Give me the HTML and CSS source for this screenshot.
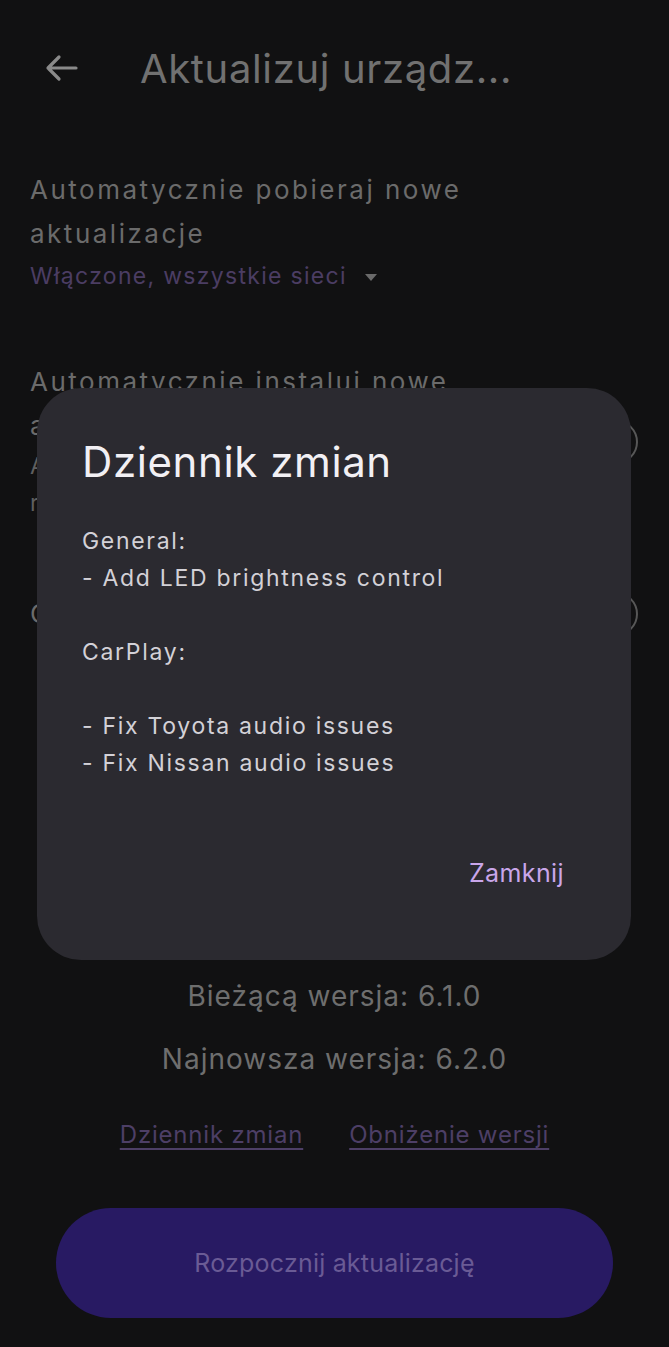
FILE: index.html
```html
<!DOCTYPE html>
<html lang="pl">
<head>
<meta charset="utf-8">
<title>Aktualizuj urządzenie</title>
<link rel="stylesheet" href="styles.css">
</head>
<body>
<div class="screen">
  <header class="topbar">
    <svg class="back" width="36" height="30" viewBox="0 0 36 30" aria-hidden="true">
      <path d="M33 15 H5 M16 4 L5 15 L16 26" fill="none" stroke="#8a8a8a" stroke-width="3.2" stroke-linecap="round" stroke-linejoin="round"/>
    </svg>
    <h1 class="title">Aktualizuj urządz...</h1>
  </header>

  <section class="settings">
    <div class="item">
      <div class="item-text">
        <div class="item-title">Automatycznie pobieraj nowe<br>aktualizacje</div>
        <div class="item-select">Włączone, wszystkie sieci <span class="caret"></span></div>
      </div>
    </div>
    <div class="item item-row item-install">
      <div class="item-text">
        <div class="item-title">Automatycznie instaluj nowe<br>aktualizacje</div>
        <div class="item-sub">Aktualizacje zostaną zainstalowane przy<br>restarcie urządzenia</div>
      </div>
      <span class="switch"></span>
    </div>
    <div class="item item-row item-third">
      <div class="item-text">
        <div class="item-title">Czyść pamięć podręczną</div>
      </div>
      <span class="switch"></span>
    </div>
  </section>

  <section class="versions">
    <p class="ver ver-current">Bieżącą wersja: 6.1.0</p>
    <p class="ver ver-latest">Najnowsza wersja: 6.2.0</p>
    <div class="links">
      <a class="link">Dziennik zmian</a>
      <a class="link">Obniżenie wersji</a>
    </div>
    <button class="start">Rozpocznij aktualizację</button>
  </section>

  <div class="dialog" role="dialog">
    <h2 class="dialog-title">Dziennik zmian</h2>
    <div class="dialog-body">
      <p>General:</p>
      <p>- Add LED brightness control</p>
      <p>&nbsp;</p>
      <p>CarPlay:</p>
      <p>&nbsp;</p>
      <p>- Fix Toyota audio issues</p>
      <p>- Fix Nissan audio issues</p>
    </div>
    <div class="dialog-actions">
      <button class="close">Zamknij</button>
    </div>
  </div>
</div>
</body>
</html>
```

FILE: styles.css
```css
* { box-sizing: border-box; }
html, body {
  margin: 0;
  padding: 0;
  background: #111112;
}
body {
  font-family: Inter, Roboto, "Noto Sans", sans-serif;
  color: #6d6d6d;
}
.screen {
  position: relative;
  width: 669px;
  height: 1347px;
  overflow: hidden;
  background: #111112;
  display: flex;
  flex-direction: column;
}
.topbar {
  display: flex;
  align-items: center;
  height: 136px;
  padding-left: 43px;
  gap: 61px;
}
.back { display: block; }
.title {
  margin: 0;
  font-size: 40px;
  font-weight: 400;
  color: #717171;
  letter-spacing: 0.65px;
}
.settings {
  display: flex;
  flex-direction: column;
  padding: 0 31px 0 30px;
}
.item { padding-top: 32px; }
.item-row {
  display: flex;
  align-items: center;
  justify-content: space-between;
}
.item-title {
  font-size: 26px;
  line-height: 44px;
  color: #6b6b6b;
  letter-spacing: 2.5px;
  white-space: nowrap;
}
.item-select {
  font-size: 23px;
  line-height: 38px;
  color: #4b3d63;
  margin-top: 1px;
  letter-spacing: 1.3px;
}
.caret {
  display: inline-block;
  width: 0;
  height: 0;
  margin-left: 10px;
  border-left: 6px solid transparent;
  border-right: 6px solid transparent;
  border-top: 7px solid #6a6a6a;
  vertical-align: middle;
}
.item-sub {
  font-size: 23px;
  line-height: 37px;
  color: #5f5f5f;
  letter-spacing: 1.3px;
  white-space: nowrap;
}
.item-install { padding-top: 65px; align-items: flex-start; }
.item-install .switch { margin-top: 60px; }
.item-third { padding-top: 70px; }
.switch {
  display: block;
  width: 86px;
  height: 44px;
  border: 2px solid #575757;
  border-radius: 22px;
  flex: none;
}
.versions {
  margin-top: auto;
  display: flex;
  flex-direction: column;
  align-items: center;
  padding-bottom: 29px;
}
.ver {
  margin: 0;
  font-size: 28px;
  line-height: 40px;
  color: #6e6e6e;
  letter-spacing: 1px;
}
.ver-latest { margin-top: 23px; }
.links {
  display: flex;
  gap: 46px;
  margin-top: 36px;
}
.link {
  font-size: 24px;
  line-height: 40px;
  color: #4d3f66;
  text-decoration: underline;
  text-underline-offset: 5px;
  letter-spacing: 0.8px;
}
.start {
  margin-top: 53px;
  width: 557px;
  height: 110px;
  border: none;
  border-radius: 55px;
  background: #281a63;
  color: #6a5b95;
  font-family: inherit;
  font-size: 25px;
  letter-spacing: 0.2px;
}
.dialog {
  position: absolute;
  left: 37px;
  top: 388px;
  width: 594px;
  height: 572px;
  background: #2b2a30;
  border-radius: 44px;
  padding: 42px 67px 0 45px;
  display: flex;
  flex-direction: column;
}
.dialog-title {
  margin: 0;
  font-size: 42px;
  font-weight: 400;
  line-height: 64px;
  color: #f2f0f4;
  letter-spacing: 0.6px;
}
.dialog-body {
  margin-top: 29px;
}
.dialog-body p {
  margin: 0;
  font-size: 23px;
  line-height: 37px;
  color: #d3d1d7;
  letter-spacing: 1.7px;
}
.dialog-actions {
  display: flex;
  justify-content: flex-end;
  margin-top: 73px;
}
.close {
  background: none;
  border: none;
  padding: 0;
  font-family: inherit;
  font-size: 25px;
  line-height: 36px;
  color: #c9a6ea;
  letter-spacing: 0.4px;
}
```
